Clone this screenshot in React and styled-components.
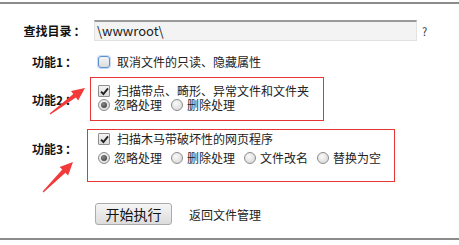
import React from "react";
import styled, { createGlobalStyle } from "styled-components";

const GlobalStyle = createGlobalStyle`
	html, body {
		margin: 0;
		padding: 0;
		background: #fff;
	}
	body {
		font-family: "Noto Sans CJK SC", "Noto Sans", sans-serif;
		font-size: 12px;
		color: #222;
	}
`;

const Page = styled.div`
	position: relative;
	margin-top: 2px;
	border-top: 2px solid #8c8c8c;
	border-bottom: 2px solid #8c8c8c;
	padding: 16px 0 13px 21px;
`;

const Row = styled.div`
	display: grid;
	grid-template-columns: 67px 1fr;
	align-items: ${({ $align }) => $align || "center"};
	margin-top: ${({ $gap }) => $gap || 0}px;
`;

const Label = styled.div`
	text-align: center;
	font-weight: bold;
	color: #111;
	line-height: 16px;
	white-space: nowrap;
	margin-top: ${({ $top }) => $top || 0}px;
`;

const Colon = styled.span`
	padding-left: 2px;
`;

const Field = styled.div`
	display: flex;
	align-items: center;
	margin-left: ${({ $offset }) => $offset || 0}px;
	padding-left: ${({ $pad }) => $pad || 0}px;
`;

const PathInput = styled.div`
	box-sizing: border-box;
	width: 323px;
	height: 21px;
	background: #f3f3f3;
	border: 1px solid #e2e2e2;
	border-top: 2px solid #9a9a9a;
	padding-left: 2px;
	font-size: 13px;
	line-height: 17px;
	color: #222;
`;

const Help = styled.span`
	margin-left: 5px;
	color: #333;
	font-size: 11px;
`;

const Box = styled.div`
	box-sizing: border-box;
	width: ${({ $w }) => $w}px;
	margin-left: ${({ $offset }) => $offset || 0}px;
	border: 1px solid #e63535;
	padding: ${({ $pad }) => $pad};
	display: flex;
	flex-direction: column;
	gap: ${({ $lineGap }) => $lineGap || 0}px;
`;

const Line = styled.div`
	display: flex;
	align-items: center;
	height: ${({ $h }) => $h || 14}px;
	line-height: ${({ $h }) => $h || 14}px;
	white-space: nowrap;
`;

const CheckBox = styled.span`
	box-sizing: border-box;
	display: inline-flex;
	align-items: center;
	justify-content: center;
	width: 12px;
	height: 12px;
	margin-right: 7px;
	border: 1px solid ${({ $focus }) => ($focus ? "#5a8fd0" : "#8f8f8f")};
	border-radius: ${({ $focus }) => ($focus ? "3px" : "1px")};
	background: linear-gradient(#f4f4f4, #dcdcdc);
	box-shadow: ${({ $focus }) => ($focus ? "0 0 0 1px #c7dcf3" : "none")};
	flex-shrink: 0;
`;

const Radio = styled.span`
	position: relative;
	box-sizing: border-box;
	display: inline-block;
	width: 12px;
	height: 12px;
	margin-right: 4px;
	border-radius: 50%;
	border: 1px solid #8d8d8d;
	background: radial-gradient(circle at 40% 35%, #fafafa, #d2d2d2);
	flex-shrink: 0;

	&::after {
		content: "";
		display: ${({ $checked }) => ($checked ? "block" : "none")};
		position: absolute;
		left: 2px;
		top: 2px;
		width: 6px;
		height: 6px;
		border-radius: 50%;
		background: radial-gradient(circle at 40% 35%, #888, #333);
	}
`;

const Option = styled.span`
	display: inline-flex;
	align-items: center;
	margin-right: 9px;
`;

const Actions = styled.div`
	display: flex;
	align-items: center;
	margin: 21px 0 0 74px;
`;

const Button = styled.button`
	box-sizing: border-box;
	width: 77px;
	height: 22px;
	padding: 0;
	border: 1px solid #acacac;
	border-radius: 3px;
	background: linear-gradient(#f5f5f5, #dcdcdc);
	font-family: inherit;
	font-size: 14px;
	color: #111;
	line-height: 18px;
`;

const BackLink = styled.a`
	margin-left: 17px;
	color: #222;
	text-decoration: none;
	font-size: 12px;
`;

const Overlay = styled.svg`
	position: absolute;
	left: 0;
	top: -4px;
	pointer-events: none;
`;

const Tick = () => (
	<svg width="9" height="9" viewBox="0 0 9 9">
		<path d="M1 4.6 L3.4 7 L8 1.4" fill="none" stroke="#222" strokeWidth="1.9" />
	</svg>
);

const arrowPoints = (tx, ty, hx, hy) => {
	const len = Math.hypot(hx - tx, hy - ty);
	const ux = (hx - tx) / len;
	const uy = (hy - ty) / len;
	const nx = -uy;
	const ny = ux;
	const bx = hx - ux * 13;
	const by = hy - uy * 13;
	const p = (x, y) => `${x.toFixed(1)},${y.toFixed(1)}`;
	return [
		p(tx + nx * 0.6, ty + ny * 0.6),
		p(bx + nx * 2.2, by + ny * 2.2),
		p(bx + nx * 6, by + ny * 6),
		p(hx, hy),
		p(bx - nx * 6, by - ny * 6),
		p(bx - nx * 2.2, by - ny * 2.2),
		p(tx - nx * 0.6, ty - ny * 0.6),
	].join(" ");
};

const Options = ({ items, checked = 0 }) =>
	items.map((label, i) => (
		<Option key={label}>
			<Radio $checked={i === checked} />
			{label}
		</Option>
	));

export default function App() {
	return (
		<>
			<GlobalStyle />
			<Page>
				<Row>
					<Label>
						查找目录<Colon>：</Colon>
					</Label>
					<Field $offset={6}>
						<PathInput>\wwwroot\</PathInput>
						<Help>?</Help>
					</Field>
				</Row>

				<Row $gap={13}>
					<Label>
						功能1<Colon>：</Colon>
					</Label>
					<Field $pad={10}>
						<Line $h={16}>
							<CheckBox $focus />
							取消文件的只读、隐藏属性
						</Line>
					</Field>
				</Row>

				<Row $gap={7} $align="start">
					<Label $top={15}>
						功能2<Colon>：</Colon>
					</Label>
					<Box $w={234} $offset={2} $pad="6px 0 8px 7px">
						<Line>
							<CheckBox>
								<Tick />
							</CheckBox>
							扫描带点、畸形、异常文件和文件夹
						</Line>
						<Line>
							<Options items={["忽略处理", "删除处理"]} />
						</Line>
					</Box>
				</Row>

				<Row $gap={8} $align="start">
					<Label $top={12}>
						功能3<Colon>：</Colon>
					</Label>
					<Box $w={308} $offset={-1} $pad="1px 0 15px 10px" $lineGap={3}>
						<Line $h={16}>
							<CheckBox>
								<Tick />
							</CheckBox>
							扫描木马带破坏性的网页程序
						</Line>
						<Line $h={16}>
							<Options items={["忽略处理", "删除处理", "文件改名", "替换为空"]} />
						</Line>
					</Box>
				</Row>

				<Actions>
					<Button>开始执行</Button>
					<BackLink href="#">返回文件管理</BackLink>
				</Actions>

				<Overlay width="120" height="245" viewBox="0 0 120 245">
					<polygon points={arrowPoints(50, 114, 85, 88)} fill="#f23a3a" />
					<polygon points={arrowPoints(43, 192, 73, 162)} fill="#f23a3a" />
				</Overlay>
			</Page>
		</>
	);
}
